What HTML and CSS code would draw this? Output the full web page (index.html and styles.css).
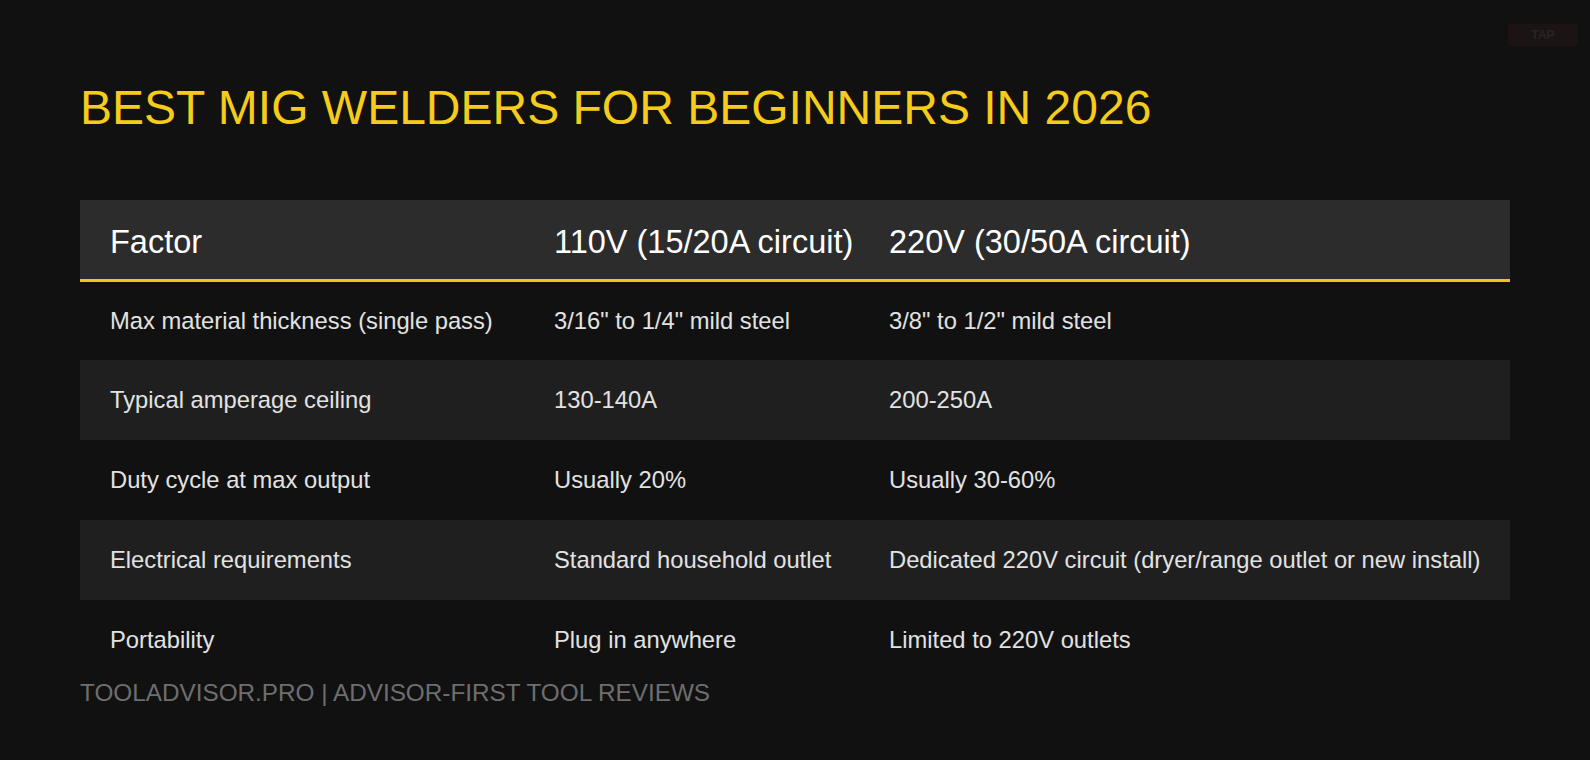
FILE: index.html
```html
<!DOCTYPE html>
<html lang="en">
<head>
<meta charset="utf-8">
<title>Best MIG Welders for Beginners in 2026</title>
<link rel="stylesheet" href="styles.css">
</head>
<body>
<div class="page">
  <div class="tap">TAP</div>
  <h1 class="title">BEST MIG WELDERS FOR BEGINNERS IN 2026</h1>
  <table class="compare">
    <colgroup>
      <col class="c1">
      <col class="c2">
      <col class="c3">
    </colgroup>
    <thead>
      <tr>
        <th>Factor</th>
        <th>110V (15/20A circuit)</th>
        <th>220V (30/50A circuit)</th>
      </tr>
    </thead>
    <tbody>
      <tr>
        <td>Max material thickness (single pass)</td>
        <td>3/16" to 1/4" mild steel</td>
        <td>3/8" to 1/2" mild steel</td>
      </tr>
      <tr>
        <td>Typical amperage ceiling</td>
        <td>130-140A</td>
        <td>200-250A</td>
      </tr>
      <tr>
        <td>Duty cycle at max output</td>
        <td>Usually 20%</td>
        <td>Usually 30-60%</td>
      </tr>
      <tr>
        <td>Electrical requirements</td>
        <td>Standard household outlet</td>
        <td>Dedicated 220V circuit (dryer/range outlet or new install)</td>
      </tr>
      <tr>
        <td>Portability</td>
        <td>Plug in anywhere</td>
        <td>Limited to 220V outlets</td>
      </tr>
    </tbody>
  </table>
  <div class="footer">TOOLADVISOR.PRO | ADVISOR-FIRST TOOL REVIEWS</div>
</div>
</body>
</html>
```

FILE: styles.css
```css
html, body {
  margin: 0;
  padding: 0;
  background: #111111;
}
body {
  font-family: "Liberation Sans", Arial, sans-serif;
  color: #e6e6e6;
}
.page {
  position: relative;
  width: 1590px;
  height: 760px;
  box-sizing: border-box;
  padding: 80px 80px 0 80px;
}
.tap {
  position: absolute;
  top: 24px;
  right: 12px;
  width: 70px;
  height: 22px;
  border-radius: 3px;
  background: #1c1414;
  color: #262424;
  font-size: 12px;
  font-weight: bold;
  line-height: 22px;
  text-align: center;
}
.title {
  margin: 0;
  font-size: 48px;
  font-weight: normal;
  color: #f5cc1a;
  line-height: 56px;
}
.compare {
  margin-top: 64px;
  width: 100%;
  border-collapse: separate;
  border-spacing: 0;
  table-layout: fixed;
}
.c1 { width: 444px; }
.c2 { width: 335px; }
.compare th {
  background: #2c2c2c;
  color: #ffffff;
  font-size: 32.5px;
  font-weight: normal;
  text-align: left;
  height: 82px;
  padding: 5px 30px 0 30px;
  border-bottom: 3px solid #f2c418;
  white-space: nowrap;
  box-sizing: border-box;
}
.compare td {
  font-size: 23.75px;
  color: #e2e2e2;
  height: 80px;
  padding: 0 30px;
  white-space: nowrap;
  box-sizing: border-box;
}
.compare tbody tr:first-child td {
  height: 78px;
}
.compare tbody tr:nth-child(even) td {
  background: #1f1f1f;
}
.footer {
  margin-top: -1px;
  font-size: 24.3px;
  line-height: 28px;
  color: #6e6e6e;
}
```
